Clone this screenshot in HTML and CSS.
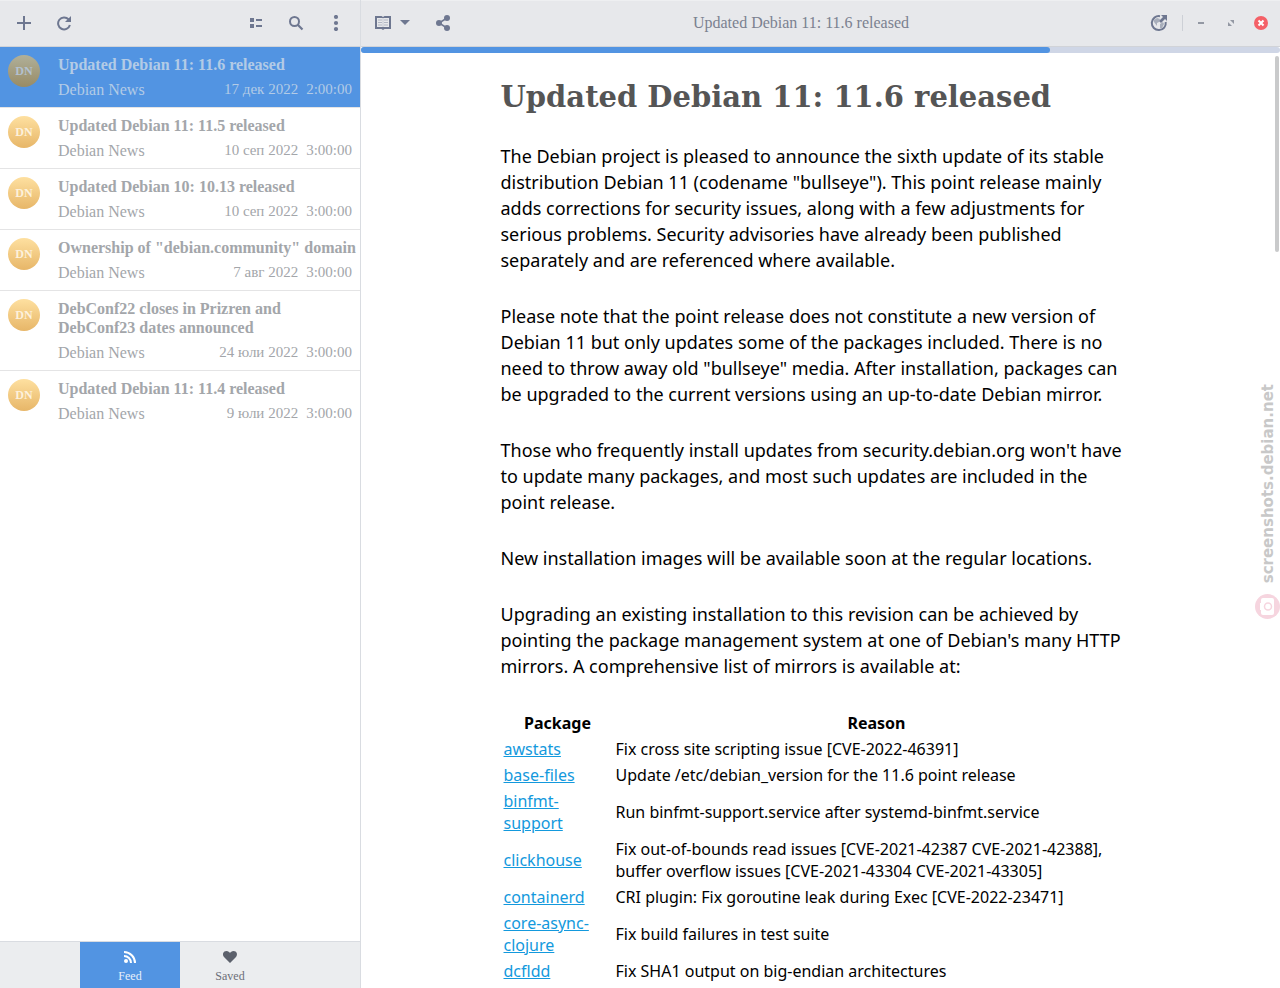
FILE: index.html
```html
<!DOCTYPE html>
<html lang="en">
<head>
    <meta charset="UTF-8">
    <meta name="viewport" content="width=device-width, initial-scale=1.0">
    <title>Updated Debian 11: 11.6 released</title>
    <link rel="stylesheet" href="styles.css">
</head>
<body>

<div class="app">
    <aside class="sidebar">
        <header class="toolbar">
            <button class="tool" aria-label="Add feed">
                <svg width="16" height="16" viewBox="0 0 16 16"><path d="M7 1h2v6h6v2H9v6H7V9H1V7h6z"/></svg>
            </button>
            <button class="tool" aria-label="Refresh">
                <svg width="16" height="16" viewBox="0 0 16 16"><path d="M12.6 4.4A6 6 0 1 0 13.9 10" fill="none" stroke="#6e7790" stroke-width="2"/><path d="M15 1v6H9z"/></svg>
            </button>
            <span class="spacer"></span>
            <button class="tool" aria-label="View">
                <svg width="16" height="16" viewBox="0 0 16 16"><path d="M2 3h4v4H2zM8 4h6v2H8zM2 9h4v4H2zM8 10h6v2H8z"/></svg>
            </button>
            <button class="tool" aria-label="Search">
                <svg width="16" height="16" viewBox="0 0 16 16"><circle cx="6.500" cy="6.500" r="4.500" fill="none" stroke="#6e7790" stroke-width="2"/><path d="M9.500 9.500l5 5" stroke="#6e7790" stroke-width="2.200"/></svg>
            </button>
            <button class="tool" aria-label="Menu">
                <svg width="16" height="16" viewBox="0 0 16 16"><circle cx="8" cy="2" r="2.100"/><circle cx="8" cy="8" r="2.100"/><circle cx="8" cy="14" r="2.100"/></svg>
            </button>
        </header>

        <ul class="feed-list">
            <li class="feed-item selected">
                <span class="avatar">DN</span>
                <div class="feed-text">
                    <div class="feed-title">Updated Debian 11: 11.6 released</div>
                    <div class="feed-meta"><span>Debian News</span><span class="date">17 дек 2022</span><span class="time">2:00:00</span></div>
                </div>
            </li>
            <li class="feed-item">
                <span class="avatar">DN</span>
                <div class="feed-text">
                    <div class="feed-title">Updated Debian 11: 11.5 released</div>
                    <div class="feed-meta"><span>Debian News</span><span class="date">10 сеп 2022</span><span class="time">3:00:00</span></div>
                </div>
            </li>
            <li class="feed-item">
                <span class="avatar">DN</span>
                <div class="feed-text">
                    <div class="feed-title">Updated Debian 10: 10.13 released</div>
                    <div class="feed-meta"><span>Debian News</span><span class="date">10 сеп 2022</span><span class="time">3:00:00</span></div>
                </div>
            </li>
            <li class="feed-item">
                <span class="avatar">DN</span>
                <div class="feed-text">
                    <div class="feed-title">Ownership of "debian.community" domain</div>
                    <div class="feed-meta"><span>Debian News</span><span class="date">7 авг 2022</span><span class="time">3:00:00</span></div>
                </div>
            </li>
            <li class="feed-item">
                <span class="avatar">DN</span>
                <div class="feed-text">
                    <div class="feed-title">DebConf22 closes in Prizren and DebConf23 dates announced</div>
                    <div class="feed-meta"><span>Debian News</span><span class="date">24 юли 2022</span><span class="time">3:00:00</span></div>
                </div>
            </li>
            <li class="feed-item">
                <span class="avatar">DN</span>
                <div class="feed-text">
                    <div class="feed-title">Updated Debian 11: 11.4 released</div>
                    <div class="feed-meta"><span>Debian News</span><span class="date">9 юли 2022</span><span class="time">3:00:00</span></div>
                </div>
            </li>
        </ul>

        <nav class="tabs">
            <button class="tab active">
                <svg width="16" height="16" viewBox="0 0 16 16"><circle cx="4" cy="12" r="2"/><path d="M2 7a7 7 0 0 1 7 7M2 3a11 11 0 0 1 11 11" fill="none" stroke="#fff" stroke-width="2"/></svg>
                Feed
            </button>
            <button class="tab">
                <svg width="16" height="16" viewBox="0 0 16 16"><path d="M8 14L2 8C0 5.500 1.200 2 4.500 2 6.300 2 7.300 3 8 4c.7-1 1.700-2 3.500-2C14.800 2 16 5.500 14 8z"/></svg>
                Saved
            </button>
        </nav>
    </aside>

    <main class="content">
        <header class="toolbar">
            <button class="reader" aria-label="Reader mode">
                <svg width="16" height="16" viewBox="0 0 16 16"><path d="M0 1h6.500L8 2l1.500-1H16v13H9.500L8 15l-1.500-1H0zm2 2v9h12V3z" fill-rule="evenodd"/><path d="M3 5h4M3 7.500h4M3 10h4M9 5h4M9 7.500h4M9 10h4" stroke="#b1b6c3"/><path d="M8 3v9" stroke="#c6cad3"/></svg>
                <svg width="10" height="6" viewBox="0 0 10 6"><path d="M0 0h10L5 5z"/></svg>
            </button>
            <button class="share" aria-label="Share">
                <svg width="16" height="16" viewBox="0 0 16 16"><path d="M12 3L4 8l8 5" fill="none" stroke="#6e7790" stroke-width="1.500"/><circle cx="12" cy="3" r="3"/><circle cx="4" cy="8" r="3"/><circle cx="12" cy="13" r="3"/></svg>
            </button>
            <h1 class="window-title">Updated Debian 11: 11.6 released</h1>
            <button class="browser" aria-label="Open in browser">
                <svg width="18" height="18" viewBox="0 0 18 18"><path d="M10 2.200A7 7 0 1 0 15.700 8" fill="none" stroke="#6e7790" stroke-width="2"/><path d="M4 6l3-2 3 1-1 3-2 1v3l-3-4zM10 10l3-2 1 2-2 4h-2z" fill="#a8aebb"/><path d="M11 1h6v6l-2-2-4 4-2-2 4-4z"/></svg>
            </button>
            <span class="separator"></span>
            <button class="win" aria-label="Minimize">
                <svg width="16" height="16" viewBox="0 0 16 16"><path d="M5 7h6v2H5z" fill="#9398a3"/></svg>
            </button>
            <button class="win" aria-label="Restore">
                <svg width="16" height="16" viewBox="0 0 16 16"><path d="M7 5h4v4zM5 7v4h4z" fill="#9398a3"/></svg>
            </button>
            <button class="win" aria-label="Close">
                <svg width="16" height="16" viewBox="0 0 16 16"><circle cx="8" cy="8" r="7" fill="#f46067"/><path d="M5.500 5.500l5 5M10.500 5.500l-5 5" stroke="#fff" stroke-width="2"/></svg>
            </button>
        </header>
        <div class="progress" role="progressbar" aria-valuenow="75">
            <div class="progress-bar" style="width: 75%"></div>
        </div>

        <div class="page">
            <article class="article">
                <h2>Updated Debian 11: 11.6 released</h2>
                <p>The Debian project is pleased to announce the sixth update of its stable distribution Debian 11 (codename "bullseye"). This point release mainly adds corrections for security issues, along with a few adjustments for serious problems. Security advisories have already been published separately and are referenced where available.</p>
                <p>Please note that the point release does not constitute a new version of Debian 11 but only updates some of the packages included. There is no need to throw away old "bullseye" media. After installation, packages can be upgraded to the current versions using an up-to-date Debian mirror.</p>
                <p>Those who frequently install updates from security.debian.org won't have to update many packages, and most such updates are included in the point release.</p>
                <p>New installation images will be available soon at the regular locations.</p>
                <p>Upgrading an existing installation to this revision can be achieved by pointing the package management system at one of Debian's many HTTP mirrors. A comprehensive list of mirrors is available at:</p>
                <table>
                    <tr><th class="package">Package</th><th>Reason</th></tr>
                    <tr><td><a href="#">awstats</a></td><td>Fix cross site scripting issue [CVE-2022-46391]</td></tr>
                    <tr><td><a href="#">base-files</a></td><td>Update /etc/debian_version for the 11.6 point release</td></tr>
                    <tr><td><a href="#">binfmt-support</a></td><td>Run binfmt-support.service after systemd-binfmt.service</td></tr>
                    <tr><td><a href="#">clickhouse</a></td><td>Fix out-of-bounds read issues [CVE-2021-42387 CVE-2021-42388], buffer overflow issues [CVE-2021-43304 CVE-2021-43305]</td></tr>
                    <tr><td><a href="#">containerd</a></td><td>CRI plugin: Fix goroutine leak during Exec [CVE-2022-23471]</td></tr>
                    <tr><td><a href="#">core-async-clojure</a></td><td>Fix build failures in test suite</td></tr>
                    <tr><td><a href="#">dcfldd</a></td><td>Fix SHA1 output on big-endian architectures</td></tr>
                </table>
            </article>
            <div class="scroll-thumb"></div>
        </div>
    </main>
</div>

<div class="watermark">
    <svg width="25" height="25" viewBox="0 0 25 25"><circle cx="12.500" cy="12.500" r="12.500" fill="#f6d5df"/><path d="M8 4h9q2 0 2 2v13q0 2-2 2H8q-2 0-2-2v-3H5V9h1V6q0-2 2-2z" fill="#fff"/><circle cx="13" cy="12.500" r="3.500" fill="none" stroke="#f6d5df" stroke-width="1.500"/></svg>
    <span>screenshots.debian.net</span>
</div>

</body>
</html>
```
FILE: styles.css
```css
* {
    box-sizing: border-box;
}
body {
    margin: 0;
    font-family: "Liberation Serif", serif;
    font-size: 16px;
    background: #fff;
    overflow: hidden;
}
button {
    border: 0;
    padding: 0;
    background: none;
    font-family: inherit;
    cursor: pointer;
}
svg {
    display: block;
    fill: #6e7790;
}
.app {
    display: flex;
    height: 100vh;
}
.sidebar {
    flex: 0 0 361px;
    display: flex;
    flex-direction: column;
    border-right: 1px solid #d9dce1;
}
.content {
    flex: 1;
    min-width: 0;
    display: flex;
    flex-direction: column;
}

/* header bars */
.toolbar {
    display: flex;
    align-items: center;
    flex: 0 0 47px;
    padding: 0 4px 1px;
    background: #e7e8eb;
    border-top: 1px solid #eeeff1;
    border-bottom: 1px solid #d1d3d8;
}
.tool, .win, .reader, .share, .browser {
    display: flex;
    align-items: center;
    justify-content: center;
    height: 32px;
}
.tool {
    width: 40px;
}
.spacer {
    flex: 1;
}
.reader {
    gap: 9px;
    padding-left: 10px;
}
.share {
    width: 32px;
    margin-left: 17px;
}
.browser {
    width: 32px;
}
.win {
    width: 30px;
}
.window-title {
    flex: 1;
    margin: 0;
    text-align: center;
    font-size: 16px;
    font-weight: normal;
    color: #7b8190;
}
.separator {
    width: 1px;
    height: 16px;
    margin: 0 3px 0 7px;
    background: #cdd0d6;
}
.progress {
    flex: 0 0 6px;
    border-radius: 3px;
    background: #cfd6e6;
}
.progress-bar {
    height: 6px;
    border-radius: 3px;
    background: #5294e2;
}

/* article list */
.feed-list {
    flex: 1;
    margin: 0;
    padding: 0;
    list-style: none;
    overflow: hidden;
}
.feed-item {
    display: flex;
    gap: 18px;
    padding: 8px;
    border-bottom: 1px solid #e4e4e5;
    color: #a3a6aa;
    line-height: 19px;
}
.feed-item:last-child {
    border-bottom: 0;
}
.avatar {
    flex: 0 0 32px;
    height: 32px;
    border-radius: 50%;
    background: linear-gradient(#fee0a0, #e7b668);
    color: #fdf1dc;
    font-size: 12px;
    font-weight: bold;
    line-height: 32px;
    text-align: center;
}
.feed-text {
    flex: 1;
}
.feed-title {
    margin: 0 -8px 6px 0;
    font-weight: bold;
}
.feed-meta {
    display: flex;
    gap: 8px;
}
.date, .time {
    font-size: 15px;
}
.date {
    margin-left: auto;
}
.selected {
    background: #5294e2;
    color: #b3cbe6;
}
.selected .avatar {
    background: linear-gradient(#b0b09a, #988b65);
    color: #b3c1d0;
}

/* bottom switcher */
.tabs {
    display: flex;
    flex: 0 0 47px;
    padding-left: 80px;
    background: #ebedef;
    border-top: 1px solid #d9dce1;
}
.tab {
    display: flex;
    flex-direction: column;
    align-items: center;
    width: 100px;
    padding-top: 7px;
    gap: 4px;
    font-size: 12px;
    line-height: 14px;
    color: #6b6f78;
}
.tab svg {
    fill: #5c616c;
}
.tab.active {
    background: #5294e2;
    color: #e8f0fa;
}
.tab.active svg {
    fill: #fff;
}

.page {
    flex: 1;
    position: relative;
    overflow: hidden;
}
.article {
    max-width: 640px;
    margin: 0 auto;
    font-family: "Noto Sans", sans-serif;
    font-size: 18px;
    line-height: 26px;
    color: #000;
}
.article h2 {
    margin: 24px 0 26px;
    font-family: "DejaVu Serif", serif;
    font-size: 29px;
    line-height: 40px;
    color: #555;
}
.article p {
    margin: 0 0 30px;
    padding-right: 8px;
}
.article table {
    width: 100%;
    font-size: 16px;
    line-height: 22px;
}
.article .package {
    width: 110px;
}
.article a {
    color: #1399dd;
}
.scroll-thumb {
    position: absolute;
    top: 3px;
    right: 1px;
    width: 4px;
    height: 196px;
    border-radius: 2px;
    background: #c9cacb;
}

.watermark {
    position: absolute;
    top: 384px;
    right: 0;
    display: flex;
    flex-direction: column-reverse;
    align-items: center;
    gap: 11px;
    font-family: "DejaVu Sans", sans-serif;
    font-size: 15px;
    font-weight: bold;
    line-height: 20px;
    color: #c8c8c8;
}
.watermark span {
    writing-mode: vertical-rl;
    transform: rotate(180deg);
}
```
